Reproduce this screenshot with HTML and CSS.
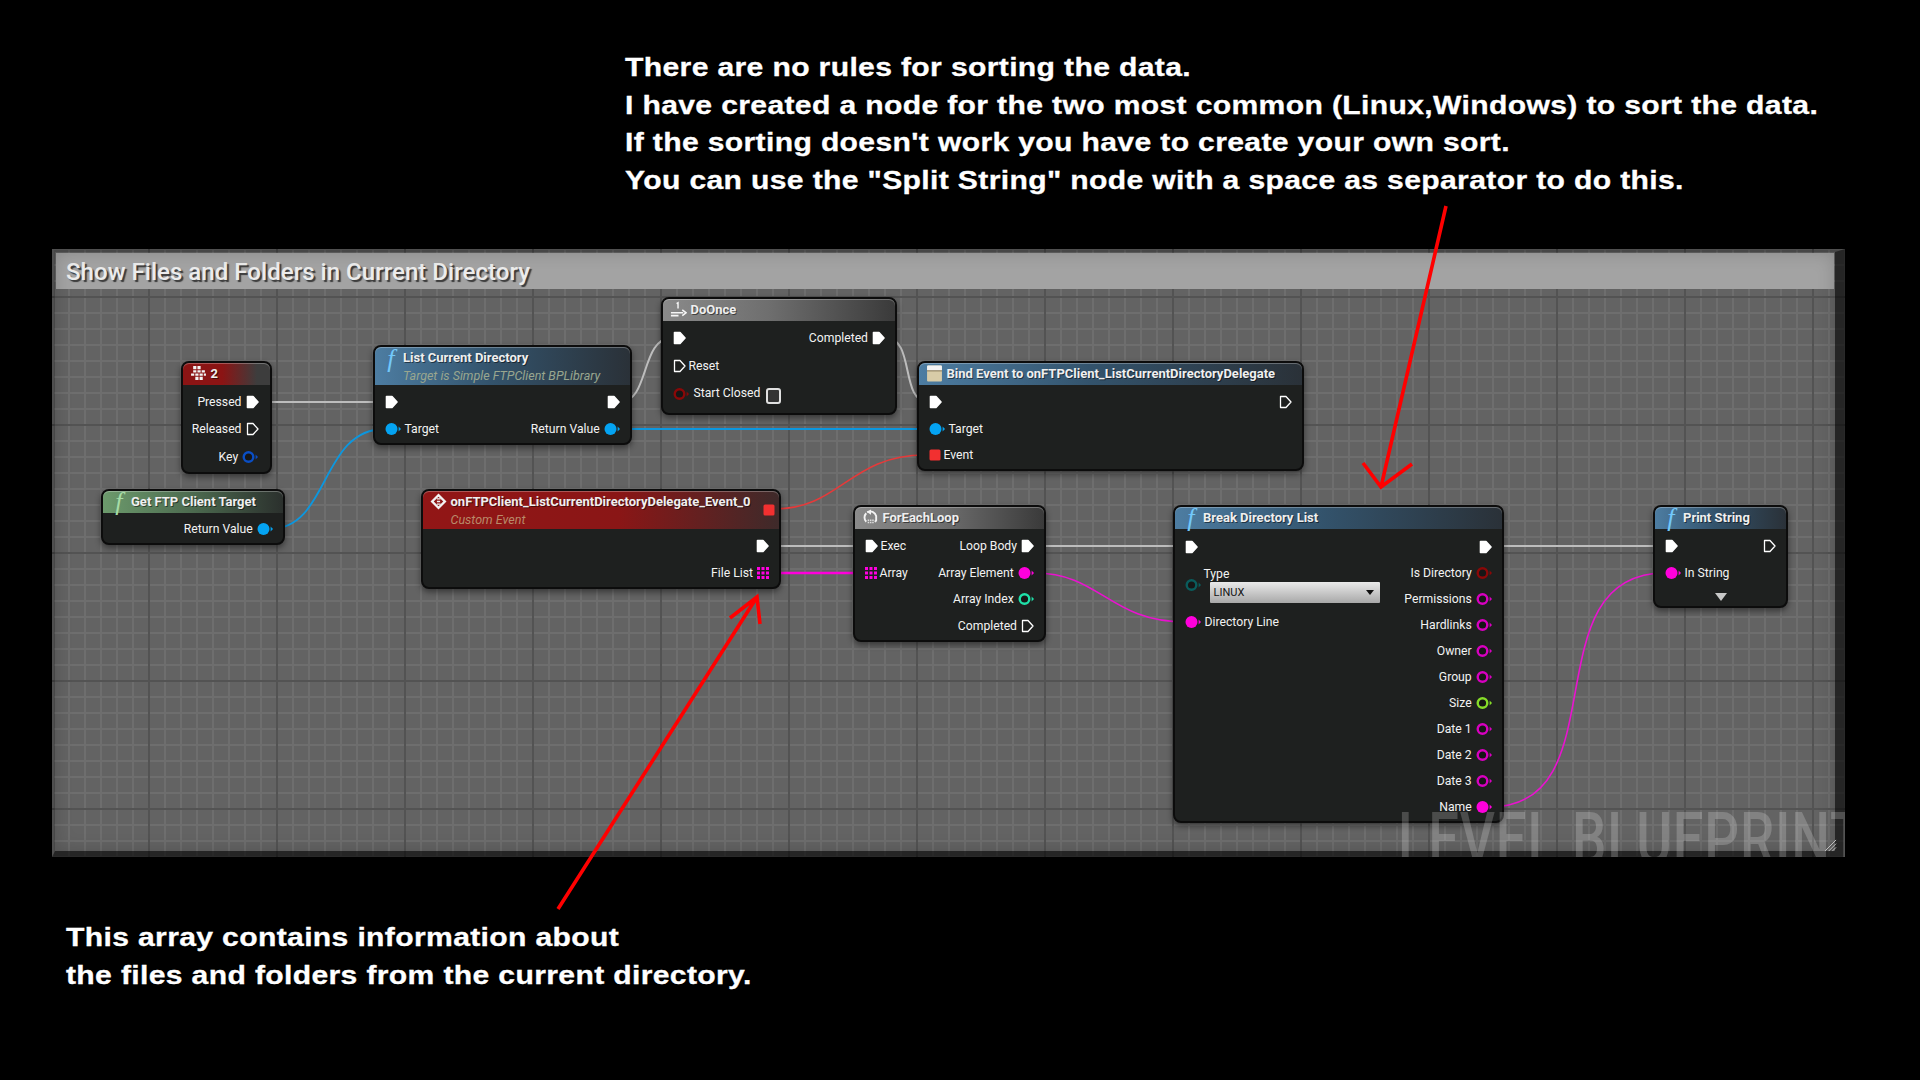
FILE: index.html
```html
<!DOCTYPE html>
<html lang="en">
<head>
<meta charset="utf-8">
<title>Show Files and Folders in Current Directory</title>
<link rel="stylesheet" href="styles.css">
</head>
<body>
<svg class="sprite" aria-hidden="true">
  <symbol id="exec-full" viewBox="0 0 13 14"><path d="M1.5 1.5H7L12 7L7 12.5H1.5Z" fill="#fff" stroke="#fff" stroke-width="1.6" stroke-linejoin="round"/></symbol>
  <symbol id="exec-open" viewBox="0 0 13 14"><path d="M1.5 1.5H7L12 7L7 12.5H1.5Z" fill="none" stroke="#fff" stroke-width="1.3" stroke-linejoin="round"/></symbol>
  <symbol id="data-full" viewBox="0 0 17 14"><circle cx="6.5" cy="7" r="6" fill="currentColor"/><path d="M13.6 4.6L16 7L13.6 9.4Z" fill="currentColor"/></symbol>
  <symbol id="data-open" viewBox="0 0 17 14"><circle cx="6.5" cy="7" r="4.8" fill="#161616" stroke="currentColor" stroke-width="2.4"/><path d="M13.6 4.6L16 7L13.6 9.4Z" fill="currentColor"/></symbol>
  <symbol id="array" viewBox="0 0 12 12"><path fill="#ff00e0" d="M0 0h3v3H0zM4.5 0h3v3h-3zM9 0h3v3H9zM0 4.5h3v3H0zM4.5 4.5h3v3h-3zM9 4.5h3v3H9zM0 9h3v3H0zM4.5 9h3v3h-3zM9 9h3v3H9z"/></symbol>
  <symbol id="square" viewBox="0 0 12 12"><rect x="0.5" y="0.5" width="11" height="11" rx="1.5" fill="#f23030"/></symbol>
  <symbol id="ico-key" viewBox="0 0 16 16"><path fill="#f4f4f4" d="M3 1h3v3H3zM7 1h3v3H7zM3 5h3v2H3zM7 5h3v2H7zM11 5h3v2h-3zM1 8h3v2H1zM5 8h3v2H5zM9 8h3v2H9zM13 8h2v2h-2zM5 11h3v3H5zM9 11h3v3H9z"/></symbol>
  <symbol id="ico-once" viewBox="0 0 18 16"><path d="M1 11.5H14M1 14.5H9" stroke="#f6f6f6" stroke-width="1.7" fill="none"/><path d="M13 8.5L17 11.5L13 14.5" fill="none" stroke="#f6f6f6" stroke-width="1.7"/><path d="M7 1.8L8.5 0.8V7" stroke="#f6f6f6" stroke-width="1.5" fill="none"/></symbol>
  <symbol id="ico-loop" viewBox="0 0 18 18"><path d="M4.5 4.5A6.4 6.4 0 0 0 4.5 13.5" fill="none" stroke="#f2f2f2" stroke-width="2"/><path d="M5.5 3.5A6.4 6.4 0 0 1 15 7.5V12A6.4 6.4 0 0 1 13.5 13.5" fill="none" stroke="#f2f2f2" stroke-width="2"/><path d="M9.5 0.5V6L5.2 3.2Z" fill="#f2f2f2"/><path d="M6 11h1.6v1.6H6zM8.4 11H10v1.6H8.4zM10.8 11h1.6v1.6h-1.6zM6 13.4h1.6V15H6zM8.4 13.4H10V15H8.4zM10.8 13.4h1.6V15h-1.6z" fill="#ddd"/></symbol>
  <symbol id="ico-bind" viewBox="0 0 15 16"><rect x="0.5" y="0.5" width="14" height="15" rx="1" fill="#d8cca8"/><rect x="0.5" y="0.5" width="14" height="5" rx="1" fill="#f4f4f4"/><path d="M0.5 5.5h14" stroke="#8a7a58"/></symbol>
  <symbol id="ico-event" viewBox="0 0 16 16"><path d="M8 0.5L15.5 8L8 15.5L0.5 8Z" fill="#f2f2f2"/><path d="M8 3.5L12.5 8L8 12.5L3.5 8Z" fill="#8c1616"/><path d="M6.5 5.5H10M6.5 8H9.5M6.5 10.5H10" stroke="#f2f2f2" stroke-width="1.2"/></symbol>
</svg>

<section class="note note-top">
  <p>There are no rules for sorting the data.</p>
  <p>I have created a node for the two most common (Linux,Windows) to sort the data.</p>
  <p>If the sorting doesn't work you have to create your own sort.</p>
  <p>You can use the "Split String" node with a space as separator to do this.</p>
</section>

<main class="canvas">
  <svg class="wires" viewBox="52 249 1793 608">
    <g class="wire exec">
      <path d="M262 402H385"/>
      <path d="M620 402C650 402 640 338 672 338"/>
      <path d="M886 338C915 338 900 402 928 402"/>
      <path d="M770 546H865"/>
      <path d="M1033 546H1180"/>
      <path d="M1492 546H1663"/>
    </g>
    <g class="wire obj">
      <path d="M618 429H928"/>
      <path d="M270 529C330 529 320 429 385 429"/>
    </g>
    <path class="wire evt" d="M775 509C840 509 850 455 925 455"/>
    <g class="wire str">
      <path class="thick" d="M770 573H865"/>
      <path d="M1035 573C1100 573 1110 622 1185 622"/>
      <path d="M1490 807C1620 807 1530 573 1665 573"/>
    </g>
  </svg>

  <h1 class="comment">Show Files and Folders in Current Directory</h1>

  <article class="node n-key">
    <header class="head h-red"><svg class="ico"><use href="#ico-key"/></svg><span class="title">2</span></header>
    <div class="pins">
      <div class="col"></div>
      <div class="col">
        <div class="pin"><span>Pressed</span><svg class="p-exec"><use href="#exec-full"/></svg></div>
        <div class="pin"><span>Released</span><svg class="p-exec"><use href="#exec-open"/></svg></div>
        <div class="pin"><span>Key</span><svg class="p-data c-key"><use href="#data-open"/></svg></div>
      </div>
    </div>
  </article>

  <article class="node n-get">
    <header class="head h-green"><i class="fn fn-green">f</i><span class="title">Get FTP Client Target</span></header>
    <div class="pins">
      <div class="col"></div>
      <div class="col">
        <div class="pin"><span>Return Value</span><svg class="p-data c-obj"><use href="#data-full"/></svg></div>
      </div>
    </div>
  </article>

  <article class="node n-list">
    <header class="head tall h-blue"><i class="fn">f</i>
      <div class="stack"><span class="title">List Current Directory</span><span class="sub">Target is Simple FTPClient BPLibrary</span></div>
    </header>
    <div class="pins">
      <div class="col">
        <div class="pin"><svg class="p-exec"><use href="#exec-full"/></svg></div>
        <div class="pin"><svg class="p-data c-obj"><use href="#data-full"/></svg><span>Target</span></div>
      </div>
      <div class="col">
        <div class="pin"><svg class="p-exec"><use href="#exec-full"/></svg></div>
        <div class="pin"><span>Return Value</span><svg class="p-data c-obj"><use href="#data-full"/></svg></div>
      </div>
    </div>
  </article>

  <article class="node n-event">
    <header class="head tall h-red2"><svg class="ico"><use href="#ico-event"/></svg>
      <div class="stack"><span class="title">onFTPClient_ListCurrentDirectoryDelegate_Event_0</span><span class="sub sub-red">Custom Event</span></div>
      <svg class="evt-square"><use href="#square"/></svg>
    </header>
    <div class="pins">
      <div class="col"></div>
      <div class="col">
        <div class="pin"><svg class="p-exec"><use href="#exec-full"/></svg></div>
        <div class="pin"><span>File List</span><svg class="p-array"><use href="#array"/></svg></div>
      </div>
    </div>
  </article>

  <article class="node n-once">
    <header class="head h-grey"><svg class="ico"><use href="#ico-once"/></svg><span class="title">DoOnce</span></header>
    <div class="pins">
      <div class="col">
        <div class="pin"><svg class="p-exec"><use href="#exec-full"/></svg></div>
        <div class="pin"><svg class="p-exec"><use href="#exec-open"/></svg><span>Reset</span></div>
        <div class="pin pin-check"><svg class="p-data c-bool"><use href="#data-open"/></svg><span class="lift">Start Closed</span><span class="check"></span></div>
      </div>
      <div class="col">
        <div class="pin"><span>Completed</span><svg class="p-exec"><use href="#exec-full"/></svg></div>
      </div>
    </div>
  </article>

  <article class="node n-bind">
    <header class="head h-blue"><svg class="ico"><use href="#ico-bind"/></svg><span class="title">Bind Event to onFTPClient_ListCurrentDirectoryDelegate</span></header>
    <div class="pins">
      <div class="col">
        <div class="pin"><svg class="p-exec"><use href="#exec-full"/></svg></div>
        <div class="pin"><svg class="p-data c-obj"><use href="#data-full"/></svg><span>Target</span></div>
        <div class="pin"><svg class="p-array"><use href="#square"/></svg><span>Event</span></div>
      </div>
      <div class="col">
        <div class="pin"><svg class="p-exec"><use href="#exec-open"/></svg></div>
      </div>
    </div>
  </article>

  <article class="node n-loop">
    <header class="head h-grey"><svg class="ico"><use href="#ico-loop"/></svg><span class="title">ForEachLoop</span></header>
    <div class="pins">
      <div class="col">
        <div class="pin"><svg class="p-exec"><use href="#exec-full"/></svg><span>Exec</span></div>
        <div class="pin"><svg class="p-array"><use href="#array"/></svg><span>Array</span></div>
      </div>
      <div class="col">
        <div class="pin"><span>Loop Body</span><svg class="p-exec"><use href="#exec-full"/></svg></div>
        <div class="pin"><span>Array Element</span><svg class="p-data c-str"><use href="#data-full"/></svg></div>
        <div class="pin"><span>Array Index</span><svg class="p-data c-int"><use href="#data-open"/></svg></div>
        <div class="pin"><span>Completed</span><svg class="p-exec"><use href="#exec-open"/></svg></div>
      </div>
    </div>
  </article>

  <article class="node n-break">
    <header class="head h-blue"><i class="fn">f</i><span class="title">Break Directory List</span></header>
    <div class="pins">
      <div class="col">
        <div class="pin"><svg class="p-exec"><use href="#exec-full"/></svg></div>
        <div class="pin-type">
          <svg class="p-data c-enum"><use href="#data-open"/></svg>
          <div class="type-box">
            <span>Type</span>
            <div class="select">LINUX<b class="caret"></b></div>
          </div>
        </div>
        <div class="pin"><svg class="p-data c-str"><use href="#data-full"/></svg><span>Directory Line</span></div>
      </div>
      <div class="col">
        <div class="pin"><svg class="p-exec"><use href="#exec-full"/></svg></div>
        <div class="pin"><span>Is Directory</span><svg class="p-data c-bool"><use href="#data-open"/></svg></div>
        <div class="pin"><span>Permissions</span><svg class="p-data c-str2"><use href="#data-open"/></svg></div>
        <div class="pin"><span>Hardlinks</span><svg class="p-data c-str2"><use href="#data-open"/></svg></div>
        <div class="pin"><span>Owner</span><svg class="p-data c-str2"><use href="#data-open"/></svg></div>
        <div class="pin"><span>Group</span><svg class="p-data c-str2"><use href="#data-open"/></svg></div>
        <div class="pin"><span>Size</span><svg class="p-data c-size"><use href="#data-open"/></svg></div>
        <div class="pin"><span>Date 1</span><svg class="p-data c-str2"><use href="#data-open"/></svg></div>
        <div class="pin"><span>Date 2</span><svg class="p-data c-str2"><use href="#data-open"/></svg></div>
        <div class="pin"><span>Date 3</span><svg class="p-data c-str2"><use href="#data-open"/></svg></div>
        <div class="pin"><span>Name</span><svg class="p-data c-str"><use href="#data-full"/></svg></div>
      </div>
    </div>
  </article>

  <article class="node n-print">
    <header class="head h-blue"><i class="fn">f</i><span class="title">Print String</span></header>
    <div class="pins">
      <div class="col">
        <div class="pin"><svg class="p-exec"><use href="#exec-full"/></svg></div>
        <div class="pin"><svg class="p-data c-str"><use href="#data-full"/></svg><span>In String</span></div>
      </div>
      <div class="col">
        <div class="pin"><svg class="p-exec"><use href="#exec-open"/></svg></div>
      </div>
    </div>
    <b class="expand"></b>
  </article>

  <div class="frame"></div>
  <div class="watermark">LEVEL BLUEPRINT</div>
  <svg class="grip" viewBox="0 0 14 14"><path d="M1 13L13 1M5 13L13 5M9 13L13 9" stroke="#c8c8c8" stroke-width="1" fill="none"/></svg>
</main>

<section class="note note-bottom">
  <p>This array contains information about</p>
  <p>the files and folders from the current directory.</p>
</section>

<svg class="arrows" viewBox="0 0 1920 1080">
  <path d="M1446 206L1381 487M1363 463L1381 487L1412 464"/>
  <path d="M558 909L757 597M730 618L757 597L760 624"/>
</svg>
</body>
</html>
```
FILE: styles.css
```css
* { box-sizing: border-box; }
html, body { margin: 0; height: 1080px; background: #000; overflow: hidden; }
body { position: relative; font-family: Roboto, "Liberation Sans", sans-serif; color: #fff; }
.sprite { display: none; }

.note { font-family: "Liberation Sans", Arial, sans-serif; font-weight: 700; font-size: 26px; line-height: 37.7px; letter-spacing: 0.3px; color: #fff; -webkit-text-stroke: .3px #fff; }
.note p { margin: 0; width: max-content; white-space: nowrap; transform: scaleX(1.158); transform-origin: 0 50%; }
.note-top { padding: 49px 0 0 625px; height: 249px; }
.note-bottom { padding: 62px 0 0 66px; }

.canvas {
  position: relative; margin-left: 52px; width: 1793px; height: 608px; overflow: hidden;
  background-color: #636363;
  background-image:
    linear-gradient(90deg, #535353 2px, transparent 2px),
    linear-gradient(#535353 2px, transparent 2px),
    linear-gradient(90deg, #6e6e6e 2px, transparent 2px),
    linear-gradient(#6e6e6e 2px, transparent 2px);
  background-size: 128px 128px, 128px 128px, 16px 16px, 16px 16px;
  background-position: 96px 0, 0 47px, 0 0, 0 15px;
}
.wires { position: absolute; inset: 0; width: 1793px; height: 608px; }
.wire, .wire path { fill: none; stroke-width: 1.6; }
.wire.exec path { stroke: #bdbdbd; stroke-width: 2; }
.wire.obj path { stroke: #0c97df; stroke-width: 1.8; }
.wire.evt { stroke: #e63a3a; }
.wire.str path { stroke: #ea12d0; }
.wire.str path.thick { stroke: #ff00dc; stroke-width: 2.4; }

.frame {
  position: absolute; inset: 0; pointer-events: none;
  border-style: solid; border-color: rgba(0,0,0,.28) rgba(0,0,0,.62) rgba(0,0,0,.62) rgba(0,0,0,.28);
  border-width: 3px 10px 6px 3px;
  box-shadow: inset 0 0 18px rgba(0,0,0,.18);
}
.comment {
  position: absolute; left: 4px; top: 4px; width: 1778px; height: 36px; margin: 0; padding: 1px 0 0 10px;
  background: #a3a3a3; font-size: 24.1px; font-weight: 500; line-height: 36px; color: #ececec;
  text-shadow: 2px 2px 1px #3a3a3a; letter-spacing: 0;
}

.node {
  position: absolute; display: flex; flex-direction: column; background: #1e201f;
  border: 2px solid #0c0c0c; border-radius: 8px; box-shadow: 0 3px 6px rgba(0,0,0,.45);
  font-size: 12.2px; color: #f2f2f2;
}
.n-key { left: 129px; top: 112px; width: 91px; height: 113px; }
.n-get { left: 49px; top: 240px; width: 184px; height: 56px; }
.n-list { left: 321px; top: 96px; width: 259px; height: 100px; }
.n-event { left: 369px; top: 240px; width: 360px; height: 100px; }
.n-once { left: 609px; top: 48px; width: 236px; height: 118px; }
.n-bind { left: 865px; top: 112px; width: 387px; height: 110px; }
.n-loop { left: 801px; top: 256px; width: 193px; height: 137px; }
.n-break { left: 1121px; top: 256px; width: 331px; height: 318px; }
.n-print { left: 1601px; top: 256px; width: 135px; height: 103px; }

.head {
  display: flex; align-items: center; gap: 3.5px; height: 22px; flex: none; padding: 0 0 1px 7px;
  border-radius: 6px 6px 0 0; box-shadow: inset 0 1px 0 rgba(255,255,255,.28);
}
.head.tall { height: 38px; align-items: flex-start; padding-top: 2px; padding-bottom: 0; }
.h-red { background: linear-gradient(90deg, #8b1414 0, #8b1414 45%, #3d3d3d 85%); }
.h-red2 { background: linear-gradient(90deg, #921616 0, #8a1616 55%, #3e2a2a 100%); }
.h-blue { background: linear-gradient(90deg, #4d7da2 0, #33536c 45%, #2a3138 100%); }
.h-green { background: linear-gradient(90deg, #6c9a6c 0, #4c6a4f 50%, #2b302d 100%); }
.h-grey { background: linear-gradient(90deg, #8a8a8a 0, #6f6f6f 45%, #3a3a3a 100%); }

.title { font-size: 13px; font-weight: 700; color: #efefef; white-space: nowrap; text-shadow: 1px 1px 0 rgba(0,0,0,.5); }
.stack { display: flex; flex-direction: column; gap: 0; line-height: 17.5px; }
.sub { font-size: 12.5px; font-style: italic; color: #99a68f; white-space: nowrap; }
.sub-red { color: #b98a6a; }
.fn { font-family: "Liberation Serif", serif; font-style: italic; font-size: 26px; line-height: 20px; color: #72c8fa; width: 17.5px; text-align: center; flex: none; }
.fn-green { color: #a6dca6; }
.ico { width: 17px; height: 17px; flex: none; }
.evt-square { width: 12px; height: 12px; margin: 11px 4px 0 auto; flex: none; }

.pins { flex: 1; display: flex; justify-content: space-between; padding: 4px 10px 0 9.5px; }
.col { display: flex; flex-direction: column; }
.col:last-child { align-items: flex-end; }
.pin { display: flex; align-items: center; gap: 3px; height: 26.5px; white-space: nowrap; }
.col:last-child .pin { gap: 4px; }
.col:last-child .p-data { margin-right: -.7px; }
.n-key .pins { padding: 3px 11.5px 0 0; }
.n-get .pins { padding-top: 3px; }
.n-key .pin { height: 27.5px; }
.n-once .pins { padding-top: 3px; }
.n-once .pin { height: 28px; }
.n-break .pin { height: 26px; }
.n-break .pin:first-child { height: 27.2px; }

.p-exec { width: 13px; height: 14px; flex: none; }
.p-data { width: 17px; height: 14px; flex: none; }
.p-array { width: 12px; height: 12px; flex: none; margin: 0; }
.c-obj { color: #04a3f2; }
.c-key { color: #0a4ec4; }
.c-str { color: #ff00dc; }
.c-str2 { color: #d800c0; }
.c-int { color: #1fe0a8; }
.c-bool { color: #8a0808; }
.c-enum { color: #0a5c5c; }
.c-size { color: #86dc28; }

.lift { position: relative; top: -1px; left: 1px; }
.pin-check { height: 32px; }
.check { width: 15px; height: 16px; margin: 3px 0 0 4px; border: 2px solid #e0e0e0; border-radius: 3px; background: #333; }

.pin-type { display: flex; gap: 0; height: 49px; align-items: center; }
.type-box { display: flex; flex-direction: column; padding-top: 1px; }
.type-box span { line-height: 15px; margin-left: 2px; }
.select {
  position: relative; width: 170px; height: 21px; margin: 0 0 0 8px; padding-left: 4px; line-height: 21px; font-size: 11px; color: #151515;
  background: linear-gradient(#eaeaea, #a8a8a8); border-radius: 1px;
}
.caret { position: absolute; right: 6px; top: 8px; border: 4px solid transparent; border-top: 5px solid #111; border-bottom: 0; }

.expand { position: absolute; left: 60px; bottom: 5px; border: 6px solid transparent; border-top: 8px solid #c8c8c8; border-bottom: 0; }

.watermark {
  position: absolute; left: 1346px; top: 555px; font-size: 72px; font-weight: 500; line-height: 72px; letter-spacing: 1px;
  color: rgba(255,255,255,.2); white-space: nowrap; transform: scaleX(.758); transform-origin: 0 0;
}
.grip { position: absolute; left: 1772px; top: 590px; width: 13px; height: 13px; }

.arrows { position: absolute; inset: 0; width: 1920px; height: 1080px; }
.arrows path { fill: none; stroke: #f00; stroke-width: 3.6; }
```
